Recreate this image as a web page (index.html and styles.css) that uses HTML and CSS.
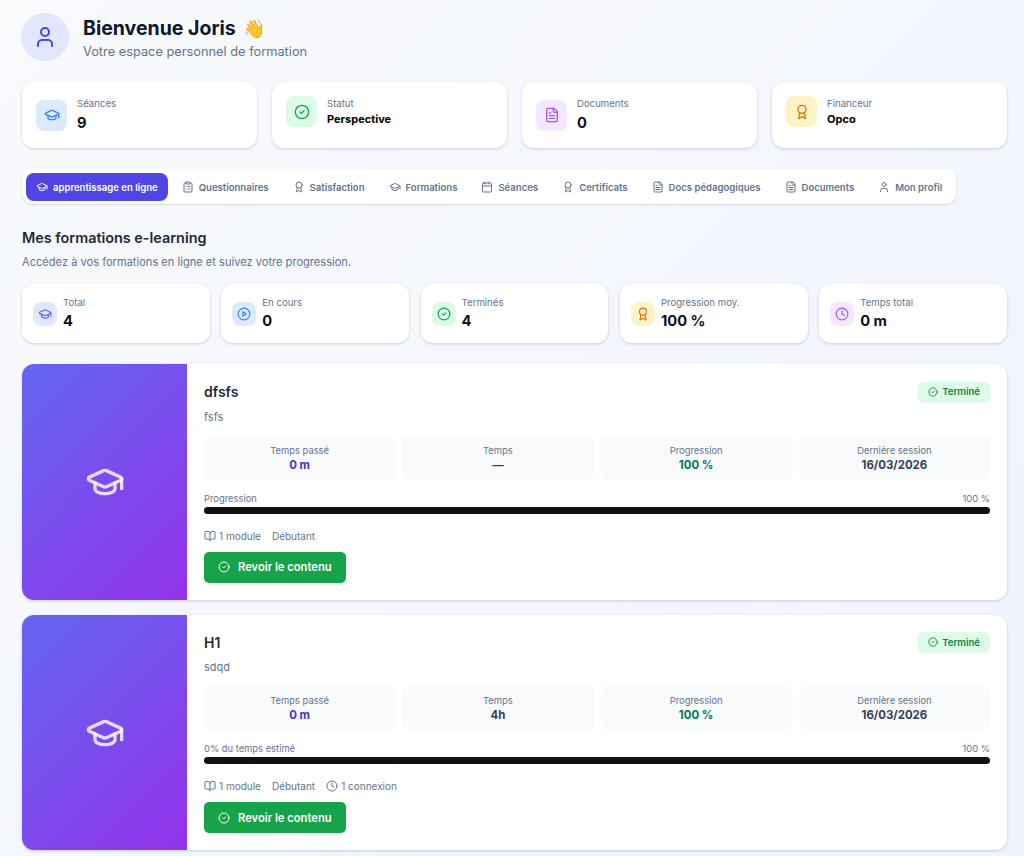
FILE: index.html
```html
<!DOCTYPE html>
<html lang="fr">
  <head>
    <meta charset="UTF-8" />
    <meta name="viewport" content="width=device-width, initial-scale=1.0" />
    <title>Espace personnel de formation</title>
    <link rel="stylesheet" href="styles.css">
  </head>
  <body>
    <!-- icones -->
    <svg class="sprite">
      <symbol id="i-cap" viewBox="0 0 24 24"><path d="M21.42 10.922a1 1 0 0 0-.019-1.838L12.83 5.18a2 2 0 0 0-1.66 0L2.6 9.08a1 1 0 0 0 0 1.832l8.57 3.908a2 2 0 0 0 1.66 0z"/><path d="M22 10v6"/><path d="M6 12.5V16a6 3 0 0 0 12 0v-3.5"/></symbol>
      <symbol id="i-check" viewBox="0 0 24 24"><circle cx="12" cy="12" r="10"/><path d="m9 12 2 2 4-4"/></symbol>
      <symbol id="i-file" viewBox="0 0 24 24"><path d="M15 2H6a2 2 0 0 0-2 2v16a2 2 0 0 0 2 2h12a2 2 0 0 0 2-2V7Z"/><path d="M14 2v4a2 2 0 0 0 2 2h4"/><path d="M10 9H8"/><path d="M16 13H8"/><path d="M16 17H8"/></symbol>
      <symbol id="i-award" viewBox="0 0 24 24"><path d="m15.477 12.89 1.515 8.526a.5.5 0 0 1-.81.47l-3.58-2.687a1 1 0 0 0-1.197 0l-3.586 2.686a.5.5 0 0 1-.81-.469l1.514-8.526"/><circle cx="12" cy="8" r="6"/></symbol>
      <symbol id="i-clip" viewBox="0 0 24 24"><rect x="8" y="2" width="8" height="4" rx="1"/><path d="M16 4h2a2 2 0 0 1 2 2v14a2 2 0 0 1-2 2H6a2 2 0 0 1-2-2V6a2 2 0 0 1 2-2h2"/><path d="M12 11h4"/><path d="M12 16h4"/><path d="M8 11h.01"/><path d="M8 16h.01"/></symbol>
      <symbol id="i-cal" viewBox="0 0 24 24"><path d="M8 2v4"/><path d="M16 2v4"/><rect x="3" y="4" width="18" height="18" rx="2"/><path d="M3 10h18"/></symbol>
      <symbol id="i-user" viewBox="0 0 24 24"><path d="M19 21v-2a4 4 0 0 0-4-4H9a4 4 0 0 0-4 4v2"/><circle cx="12" cy="7" r="4"/></symbol>
      <symbol id="i-play" viewBox="0 0 24 24"><circle cx="12" cy="12" r="10"/><polygon points="10 8 16 12 10 16 10 8"/></symbol>
      <symbol id="i-clock" viewBox="0 0 24 24"><circle cx="12" cy="12" r="10"/><polyline points="12 6 12 12 16 14"/></symbol>
      <symbol id="i-book" viewBox="0 0 24 24"><path d="M12 7v14"/><path d="M3 18a1 1 0 0 1-1-1V4a1 1 0 0 1 1-1h5a4 4 0 0 1 4 4 4 4 0 0 1 4-4h5a1 1 0 0 1 1 1v13a1 1 0 0 1-1 1h-6a3 3 0 0 0-3 3 3 3 0 0 0-3-3z"/></symbol>
    </svg>

    <div class="wrap">
      <!-- entete -->
      <header class="head">
        <div class="avatar"><svg class="ico ico-24"><use href="#i-user"/></svg></div>
        <div>
          <h1>Bienvenue Joris <span class="wave">👋</span></h1>
          <p>Votre espace personnel de formation</p>
        </div>
      </header>

      <!-- resume -->
      <section class="summary">
        <div class="stat big">
          <div class="pic blue"><svg class="ico ico-16"><use href="#i-cap"/></svg></div>
          <div><span class="lbl">Séances</span><strong class="num">9</strong></div>
        </div>
        <div class="stat big">
          <div class="pic green"><svg class="ico ico-16"><use href="#i-check"/></svg></div>
          <div><span class="lbl">Statut</span><strong class="txt">Perspective</strong></div>
        </div>
        <div class="stat big">
          <div class="pic purple"><svg class="ico ico-16"><use href="#i-file"/></svg></div>
          <div><span class="lbl">Documents</span><strong class="num">0</strong></div>
        </div>
        <div class="stat big">
          <div class="pic amber"><svg class="ico ico-16"><use href="#i-award"/></svg></div>
          <div><span class="lbl">Financeur</span><strong class="txt">Opco</strong></div>
        </div>
      </section>

      <!-- onglets -->
      <nav class="tabs">
        <a class="tab on"><svg class="ico"><use href="#i-cap"/></svg>apprentissage en ligne</a>
        <a class="tab"><svg class="ico"><use href="#i-clip"/></svg>Questionnaires</a>
        <a class="tab"><svg class="ico"><use href="#i-award"/></svg>Satisfaction</a>
        <a class="tab"><svg class="ico"><use href="#i-cap"/></svg>Formations</a>
        <a class="tab"><svg class="ico"><use href="#i-cal"/></svg>Séances</a>
        <a class="tab"><svg class="ico"><use href="#i-award"/></svg>Certificats</a>
        <a class="tab"><svg class="ico"><use href="#i-file"/></svg>Docs pédagogiques</a>
        <a class="tab"><svg class="ico"><use href="#i-file"/></svg>Documents</a>
        <a class="tab"><svg class="ico"><use href="#i-user"/></svg>Mon profil</a>
      </nav>

      <h2>Mes formations e-learning</h2>
      <p class="sub">Accédez à vos formations en ligne et suivez votre progression.</p>

      <section class="counters">
        <div class="stat small">
          <div class="pic indigo"><svg class="ico ico-14"><use href="#i-cap"/></svg></div>
          <div><span class="lbl">Total</span><strong class="num">4</strong></div>
        </div>
        <div class="stat small">
          <div class="pic blue"><svg class="ico ico-14"><use href="#i-play"/></svg></div>
          <div><span class="lbl">En cours</span><strong class="num">0</strong></div>
        </div>
        <div class="stat small">
          <div class="pic green"><svg class="ico ico-14"><use href="#i-check"/></svg></div>
          <div><span class="lbl">Terminés</span><strong class="num">4</strong></div>
        </div>
        <div class="stat small">
          <div class="pic amber"><svg class="ico ico-14"><use href="#i-award"/></svg></div>
          <div><span class="lbl">Progression moy.</span><strong class="num">100 %</strong></div>
        </div>
        <div class="stat small">
          <div class="pic purple"><svg class="ico ico-14"><use href="#i-clock"/></svg></div>
          <div><span class="lbl">Temps total</span><strong class="num">0 m</strong></div>
        </div>
      </section>

      <!-- formation 1 -->
      <article class="course">
        <div class="thumb"><svg class="ico ico-40"><use href="#i-cap"/></svg></div>
        <div class="body">
          <div class="top">
            <h3>dfsfs</h3>
            <span class="badge"><svg class="ico"><use href="#i-check"/></svg>Terminé</span>
          </div>
          <p class="desc">fsfs</p>
          <div class="infos">
            <div class="info"><span>Temps passé</span><b class="c-indigo">0 m</b></div>
            <div class="info"><span>Temps</span><b>—</b></div>
            <div class="info"><span>Progression</span><b class="c-green">100 %</b></div>
            <div class="info"><span>Dernière session</span><b>16/03/2026</b></div>
          </div>
          <div class="prog"><span>Progression</span><span>100 %</span></div>
          <div class="bar"></div>
          <div class="meta">
            <span><svg class="ico"><use href="#i-book"/></svg>1 module</span>
            <span>Débutant</span>
          </div>
          <a class="btn"><svg class="ico"><use href="#i-check"/></svg>Revoir le contenu</a>
        </div>
      </article>

      <!-- formation 2 -->
      <article class="course">
        <div class="thumb"><svg class="ico ico-40"><use href="#i-cap"/></svg></div>
        <div class="body">
          <div class="top">
            <h3>H1</h3>
            <span class="badge"><svg class="ico"><use href="#i-check"/></svg>Terminé</span>
          </div>
          <p class="desc">sdqd</p>
          <div class="infos">
            <div class="info"><span>Temps passé</span><b class="c-indigo">0 m</b></div>
            <div class="info"><span>Temps</span><b>4h</b></div>
            <div class="info"><span>Progression</span><b class="c-green">100 %</b></div>
            <div class="info"><span>Dernière session</span><b>16/03/2026</b></div>
          </div>
          <div class="prog"><span>0% du temps estimé</span><span>100 %</span></div>
          <div class="bar"></div>
          <div class="meta">
            <span><svg class="ico"><use href="#i-book"/></svg>1 module</span>
            <span>Débutant</span>
            <span><svg class="ico"><use href="#i-clock"/></svg>1 connexion</span>
          </div>
          <a class="btn"><svg class="ico"><use href="#i-check"/></svg>Revoir le contenu</a>
        </div>
      </article>
    </div>
  </body>
</html>
```

FILE: styles.css
```css
html,
body {
  margin: 0;
  padding: 0;
}
body {
  min-height: 856px;
  background: linear-gradient(135deg, #f8fafc, #eff3fe);
  font-family: Inter, "Liberation Sans", sans-serif;
  color: #1e293b;
}
h1, h2, h3, p {
  margin: 0;
}
.sprite {
  display: none;
}

/* icones */
.ico {
  width: 12px;
  height: 12px;
  flex: none;
  fill: none;
  stroke: currentColor;
  stroke-width: 2;
  stroke-linecap: round;
  stroke-linejoin: round;
}
.ico-14 { width: 14px; height: 14px; }
.ico-16 { width: 16px; height: 16px; }
.ico-24 { width: 24px; height: 24px; }
.ico-40 { width: 40px; height: 40px; }

/* page */
.wrap {
  padding: 13px 17px 5px 22px;
}

/* entete */
.head {
  display: flex;
  align-items: center;
  gap: 14px;
  margin-left: -1px;
}
.avatar {
  width: 48px;
  height: 48px;
  border-radius: 50%;
  background: #e0e7ff;
  color: #4f46e5;
  display: flex;
  align-items: center;
  justify-content: center;
}
h1 {
  font-size: 19.5px;
  line-height: 28px;
  font-weight: 700;
  color: #0f172a;
}
.wave {
  margin-left: 3px;
  font-size: 18px;
}
.head p {
  font-size: 12.8px;
  line-height: 17px;
  color: #64748b;
}

/* cartes stat */
.summary {
  display: grid;
  grid-template-columns: repeat(4, 1fr);
  gap: 15px;
  margin-top: 21px;
}
.counters {
  display: grid;
  grid-template-columns: repeat(5, 1fr);
  gap: 11.5px;
  margin-top: 14px;
}
.stat {
  display: flex;
  align-items: center;
  background: #fff;
  border-radius: 12px;
  box-shadow: 0 1px 3px rgba(15, 23, 42, 0.18);
}
/* la rangee reste en haut de la carte quand le texte est plus court */
.stat.big {
  box-sizing: border-box;
  height: 66px;
  flex-wrap: wrap;
  align-content: flex-start;
  gap: 10px;
  padding: 14px;
}
.stat.small {
  height: 59px;
  gap: 6px;
  padding: 0 11px;
}
.pic {
  display: flex;
  align-items: center;
  justify-content: center;
  flex: none;
  border-radius: 8px;
}
.big .pic { width: 31px; height: 31px; }
.small .pic { width: 24px; height: 24px; }
.blue { background: #dbeafe; color: #3b82f6; }
.green { background: #dcfce7; color: #16a34a; }
.purple { background: #f3e8ff; color: #a855f7; }
.amber { background: #fef3c7; color: #d97706; }
.indigo { background: #e0e7ff; color: #6366f1; }
.lbl {
  display: block;
  font-size: 9.6px;
  line-height: 14px;
  color: #64748b;
}
.big .lbl {
  padding-top: 0.6px;
}
.num {
  display: block;
  font-size: 14.7px;
  font-weight: 700;
  color: #0b1120;
}
.big .num { line-height: 24px; }
.small .num { line-height: 22px; }
.txt {
  display: block;
  font-size: 11px;
  line-height: 16px;
  font-weight: 700;
  color: #000;
}

/* onglets */
.tabs {
  display: inline-flex;
  gap: 4px;
  margin-top: 21px;
  padding: 4px 4px 3px;
  background: #fff;
  border-radius: 10px;
  box-shadow: 0 1px 2px rgba(15, 23, 42, 0.14);
}
.tab {
  display: flex;
  align-items: center;
  gap: 5px;
  height: 28px;
  padding: 0 10px;
  border-radius: 8px;
  font-size: 9.55px;
  font-weight: 600;
  color: #64748b;
}
.tab.on {
  background: #4f46e5;
  color: #fff;
}

/* titre section */
h2 {
  margin-top: 24px;
  font-size: 14.4px;
  line-height: 20px;
  font-weight: 600;
}
.sub {
  margin-top: 6px;
  font-size: 11.1px;
  line-height: 16px;
  color: #64748b;
}

/* formation */
.course {
  display: flex;
  height: 235.7px;
  margin-top: 15px;
  background: #fff;
  border-radius: 12px;
  overflow: hidden;
  box-shadow: 0 1px 3px rgba(15, 23, 42, 0.18);
}
.counters + .course {
  margin-top: 21px;
}
.thumb {
  width: 165px;
  flex: none;
  display: flex;
  align-items: center;
  justify-content: center;
  background: linear-gradient(135deg, #6366f1, #9333ea);
  color: rgba(255, 255, 255, 0.8);
}
.body {
  flex: 1;
  padding: 17.6px 17px 17px;
}
.top {
  display: flex;
  justify-content: space-between;
  align-items: center;
}
h3 {
  font-size: 14px;
  font-weight: 600;
  color: #1e293b;
}
.badge {
  display: flex;
  align-items: center;
  gap: 4px;
  height: 20px;
  padding: 0 10px;
  border-radius: 6px;
  background: #dcfce7;
  color: #15803d;
  font-size: 9.6px;
  font-weight: 600;
  box-shadow: 0 1px 2px rgba(15, 23, 42, 0.08);
}
.badge .ico {
  width: 10px;
  height: 10px;
}
.desc {
  margin-top: 7px;
  font-size: 11px;
  line-height: 16px;
  color: #64748b;
}
.infos {
  display: grid;
  grid-template-columns: repeat(4, 1fr);
  gap: 7px;
  margin-top: 11px;
}
.info {
  height: 44px;
  display: flex;
  flex-direction: column;
  align-items: center;
  justify-content: center;
  background: #f8fafc;
  border-radius: 7px;
  font-size: 9.4px;
  line-height: 15px;
  color: #64748b;
}
.info b {
  font-size: 11.4px;
  font-weight: 700;
  color: #334155;
}
.info b.c-indigo { color: #4338ca; }
.info b.c-green { color: #047857; }
.prog {
  display: flex;
  justify-content: space-between;
  margin-top: 12px;
  font-size: 9.4px;
  line-height: 14px;
  color: #64748b;
}
.bar {
  height: 7px;
  margin-top: 1px;
  border-radius: 4px;
  background: #111;
}
.meta {
  display: flex;
  gap: 11px;
  margin-top: 15px;
  font-size: 10px;
  line-height: 14px;
  color: #64748b;
}
.meta span {
  display: flex;
  align-items: center;
  gap: 3px;
}
.btn {
  display: inline-flex;
  align-items: center;
  gap: 8px;
  height: 31px;
  margin-top: 9px;
  padding: 0 14px;
  border-radius: 5px;
  background: #16a34a;
  color: #fff;
  font-size: 11.2px;
  font-weight: 600;
}
```
